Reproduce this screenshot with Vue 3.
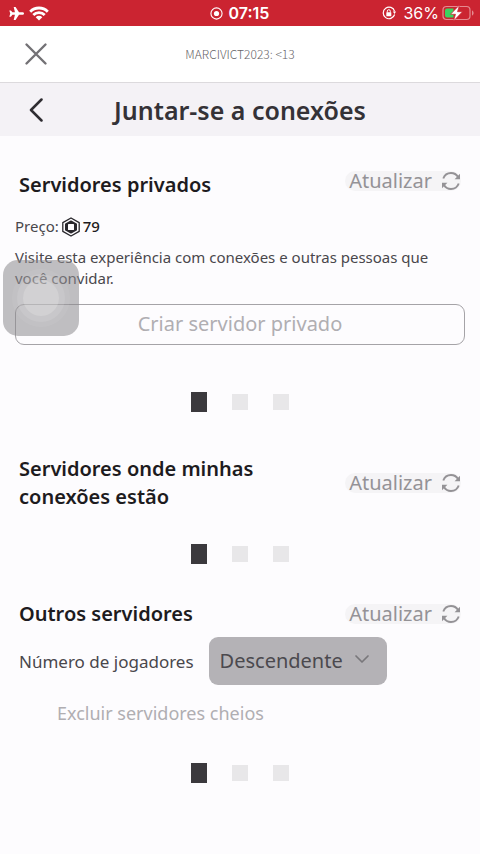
<script setup>
import { ref } from 'vue'

const order = ref('desc')
const hideFull = ref(false)
</script>

<template>
  <div class="screen">
    <header class="status">
      <div class="status-side">
        <svg class="plane" viewBox="0 0 24 24" width="15" height="15" aria-hidden="true">
          <path fill="#fff" d="M24 12c0-1.200-1-2-3-2h-5L10.500 1.500H7.500l2 8.500H5.500L3 7H.5L2 12 .5 17H3l2.500-3h4l-2 8.500h3L16 14h5c2 0 3-.8 3-2z" />
        </svg>
        <svg viewBox="0 0 20 15" width="20" height="15" aria-hidden="true">
          <g fill="none" stroke="#fff" stroke-width="2.800">
            <path d="M1.200 5.700a12.300 12.300 0 0 1 17.600 0" />
            <path d="M4.300 9a8 8 0 0 1 11.400 0" />
          </g>
          <path fill="#fff" d="M10 14.500l-3.300-3.300a4.700 4.700 0 0 1 6.600 0z" />
        </svg>
      </div>
      <div class="status-time">
        <svg viewBox="0 0 14 14" width="13" height="13" aria-hidden="true">
          <circle cx="7" cy="7" r="6" fill="none" stroke="#fff" stroke-width="1.200" />
          <circle cx="7" cy="7" r="2.800" fill="#fff" />
        </svg>
        <span>07:15</span>
      </div>
      <div class="status-side status-right">
        <svg viewBox="0 0 14 14" width="14" height="14" aria-hidden="true">
          <path d="M12.600 8.500A5.800 5.800 0 1 1 12.600 5.300" fill="none" stroke="#fff" stroke-width="1.200" />
          <path d="M10.800 5.500h3.200l-1.400 2.600z" fill="#fff" />
          <rect x="4.300" y="6.300" width="5" height="3.900" rx=".5" fill="#fff" />
          <path d="M5.300 6.500V5.200a1.500 1.500 0 0 1 3 0v1.300" fill="none" stroke="#fff" stroke-width="1" />
        </svg>
        <span class="percent">36%</span>
        <svg viewBox="0 0 32 16" width="32" height="16" aria-hidden="true">
          <rect x="1" y="1.500" width="27" height="13" rx="3.500" fill="none" stroke="#e58a90" stroke-width="1.200" />
          <path d="M30 5.500v5c1-.3 1.600-1.300 1.600-2.500S31 5.800 30 5.500z" fill="#e58a90" />
          <path d="M5 3.500h6.500v9H5a2 2 0 0 1-2-2v-5a2 2 0 0 1 2-2z" fill="#3bd35f" />
          <path d="M17.500 0L8.500 9.300h5L11.500 16l9-9.300h-5z" fill="#fff" stroke="#cb2431" stroke-width=".7" />
        </svg>
      </div>
    </header>

    <div class="account">
      <button class="icon-button" type="button" aria-label="Fechar">
        <svg viewBox="0 0 24 24" width="24" height="24" aria-hidden="true">
          <path d="M2.500 2.500l19 19M21.500 2.500l-19 19" fill="none" stroke="#737175" stroke-width="2.400" stroke-linecap="round" />
        </svg>
      </button>
      <span class="account-name">MARCIVICT2023: &lt;13</span>
    </div>

    <div class="titlebar">
      <button class="icon-button" type="button" aria-label="Voltar">
        <svg viewBox="0 0 24 24" width="24" height="24" aria-hidden="true">
          <path d="M17.500 1.500L7 12l10.500 10.500" fill="none" stroke="#2f2d32" stroke-width="2.500" stroke-linecap="round" stroke-linejoin="round" />
        </svg>
      </button>
      <h1>Juntar-se a conexões</h1>
    </div>

    <main>
      <section class="private">
        <div class="head">
          <h2>Servidores privados</h2>
          <button class="refresh" type="button">
            <span>Atualizar</span>
            <svg viewBox="0 0 20 20" width="20" height="20" aria-hidden="true">
              <g fill="none" stroke="#949296" stroke-width="1.900">
                <path d="M2.300 7.500C3.500 4 6.500 2 10 2c3 0 5.500 1.400 7 4" />
                <path d="M17.700 12.500C16.500 16 13.500 18 10 18c-3 0-5.500-1.400-7-4" />
              </g>
              <path d="M19 2.800v5.400h-5.400zM1 17.200v-5.400h5.400z" fill="#949296" />
            </svg>
          </button>
        </div>
        <p class="price">
          <span>Preço:</span>
          <svg viewBox="0 0 20 20" width="20" height="20" aria-label="Robux" role="img">
            <path d="M10 1l8.200 4.600v8.800L10 19l-8.200-4.600V5.600z" fill="none" stroke="#29272c" stroke-width="1.300" stroke-linejoin="round" />
            <path d="M10 4.200l5.300 2.900v5.800L10 15.800l-5.300-2.900V7.100z" fill="#29272c" stroke="#29272c" stroke-width="1.400" stroke-linejoin="round" />
            <rect x="7" y="7" width="6" height="6" rx=".5" fill="#fdfcfe" />
          </svg>
          <strong>79</strong>
        </p>
        <p class="description">Visite esta experiência com conexões e outras pessoas que você convidar.</p>
        <button class="create" type="button" disabled>Criar servidor privado</button>
        <div class="loader"><i class="on"></i><i></i><i></i></div>
      </section>

      <section class="friends">
        <div class="head">
          <h2>Servidores onde minhas conexões estão</h2>
          <button class="refresh" type="button">
            <span>Atualizar</span>
            <svg viewBox="0 0 20 20" width="20" height="20" aria-hidden="true">
              <g fill="none" stroke="#949296" stroke-width="1.900">
                <path d="M2.300 7.500C3.500 4 6.500 2 10 2c3 0 5.500 1.400 7 4" />
                <path d="M17.700 12.500C16.500 16 13.500 18 10 18c-3 0-5.500-1.400-7-4" />
              </g>
              <path d="M19 2.800v5.400h-5.400zM1 17.200v-5.400h5.400z" fill="#949296" />
            </svg>
          </button>
        </div>
        <div class="loader"><i class="on"></i><i></i><i></i></div>
      </section>

      <section class="others">
        <div class="head">
          <h2>Outros servidores</h2>
          <button class="refresh" type="button">
            <span>Atualizar</span>
            <svg viewBox="0 0 20 20" width="20" height="20" aria-hidden="true">
              <g fill="none" stroke="#949296" stroke-width="1.900">
                <path d="M2.300 7.500C3.500 4 6.500 2 10 2c3 0 5.500 1.400 7 4" />
                <path d="M17.700 12.500C16.500 16 13.500 18 10 18c-3 0-5.500-1.400-7-4" />
              </g>
              <path d="M19 2.800v5.400h-5.400zM1 17.200v-5.400h5.400z" fill="#949296" />
            </svg>
          </button>
        </div>
        <div class="sort">
          <label for="order">Número de jogadores</label>
          <div class="select">
            <select id="order" v-model="order">
              <option value="desc">Descendente</option>
            </select>
            <svg class="chevron" viewBox="0 0 16 16" width="16" height="16" aria-hidden="true">
              <path d="M2 5l6 6 6-6" fill="none" stroke="#79777b" stroke-width="1.700" stroke-linecap="round" stroke-linejoin="round" />
            </svg>
          </div>
        </div>
        <label class="exclude">
          <input v-model="hideFull" type="checkbox" disabled>
          <span>Excluir servidores cheios</span>
        </label>
        <div class="loader"><i class="on"></i><i></i><i></i></div>
      </section>
    </main>

    <button class="assistive" type="button" aria-label="AssistiveTouch"><span></span></button>
  </div>
</template>

<style>
body {
  margin: 0;
  background: #fdfcfe;
}
</style>

<style scoped>
.screen {
  position: relative;
  min-height: 100vh;
  background: #fdfcfe;
  color: #1d1b20;
  font-family: "Noto Sans", sans-serif;
}
button, select {
  font: inherit;
  color: inherit;
  margin: 0;
  padding: 0;
  border: 0;
  background: none;
}
h1, h2, p { margin: 0; }
svg { display: block; flex: none; }

.status {
  display: grid;
  grid-template-columns: 1fr auto 1fr;
  align-items: center;
  height: 26px;
  padding: 0 6px 0 9px;
  background: #cb2431;
  color: #fff;
  font-family: Inter, sans-serif;
  font-size: 16px;
  line-height: 26px;
}
.status-side { display: flex; align-items: center; gap: 5px; }
.status-right { justify-content: flex-end; gap: 3px; }
.percent { margin-left: 4px; }
.status-time {
  display: flex;
  align-items: center;
  gap: 6px;
  padding-right: 4px;
  font-weight: 600;
}

.account, .titlebar {
  display: grid;
  grid-template-columns: 24px 1fr 24px;
  align-items: center;
  padding: 0 24px;
  text-align: center;
}
.account {
  height: 56px;
  border-bottom: 1px solid #dcdadd;
  background: #fff;
}
.account-name {
  color: #666468;
  font-family: "Noto Sans CJK JP", sans-serif;
  font-size: 12px;
  line-height: 16px;
  font-weight: 300;
}
.titlebar {
  height: 53px;
  background: #f4f2f6;
}
h1 {
  color: #343237;
  font-size: 25px;
  line-height: 32px;
  font-weight: 600;
}

main { padding: 28px 15px 0; }
.head {
  display: flex;
  align-items: center;
  justify-content: space-between;
  padding: 0 4px;
}
h2 {
  max-width: 260px;
  font-size: 20px;
  line-height: 28px;
  font-weight: 600;
}
.refresh {
  display: flex;
  align-items: center;
  gap: 9px;
  height: 20px;
  padding-left: 4px;
  border-radius: 10px;
  background: #f5f4f6;
  color: #949296;
  font-size: 20px;
  line-height: 20px;
}
.private .head { align-items: flex-start; padding-top: 7px; }
.price {
  display: flex;
  align-items: center;
  gap: 2px;
  margin-top: 17px;
  font-size: 15px;
  line-height: 21px;
  color: #49474c;
}
.price strong { color: #1d1b20; font-weight: 500; }
.description {
  margin-top: 10px;
  padding-right: 20px;
  color: #49474c;
  font-size: 15px;
  line-height: 21px;
}
.create {
  width: 100%;
  height: 41px;
  margin-top: 15px;
  padding-bottom: 2px;
  border: 1px solid #a5a3a7;
  border-radius: 9px;
  color: #b0aeb2;
  font-size: 20px;
}
.loader {
  display: flex;
  align-items: center;
  justify-content: center;
  gap: 25px;
  height: 20px;
}
.loader i { width: 16px; height: 16px; background: #e8e7e9; }
.loader .on { height: 20px; background: #3b393d; }
.private .loader { margin-top: 47px; }
.friends { margin-top: 43px; }
.friends .loader { margin-top: 33px; }
.others { margin-top: 36px; }
.sort {
  display: flex;
  align-items: center;
  gap: 15px;
  margin-top: 9px;
  padding-left: 4px;
  color: #49474c;
  font-size: 17px;
}
.select { position: relative; }
select {
  appearance: none;
  width: 178px;
  height: 48px;
  padding: 0 40px 2px 11px;
  border-radius: 9px;
  background: #b4b2b6;
  color: #4b494e;
  font-size: 20px;
}
.chevron {
  position: absolute;
  top: 14px;
  right: 17px;
  pointer-events: none;
}
.exclude {
  display: flex;
  align-items: center;
  gap: 18px;
  margin-top: 17px;
  padding-left: 4px;
  color: #b0aeb2;
  font-size: 18px;
  line-height: 22px;
}
.exclude input { width: 20px; height: 20px; margin: 0; opacity: 0; }
.others .loader { margin-top: 39px; }

.assistive {
  position: absolute;
  top: 260px;
  left: 3px;
  display: grid;
  place-items: center;
  width: 76px;
  height: 76px;
  border-radius: 15px;
  background: rgba(140, 138, 142, .55);
}
.assistive span {
  width: 36px;
  height: 36px;
  border-radius: 50%;
  background: rgba(255, 255, 255, .3);
  box-shadow: 0 0 0 6px rgba(255, 255, 255, .1), 0 0 0 11px rgba(255, 255, 255, .06);
}
</style>
